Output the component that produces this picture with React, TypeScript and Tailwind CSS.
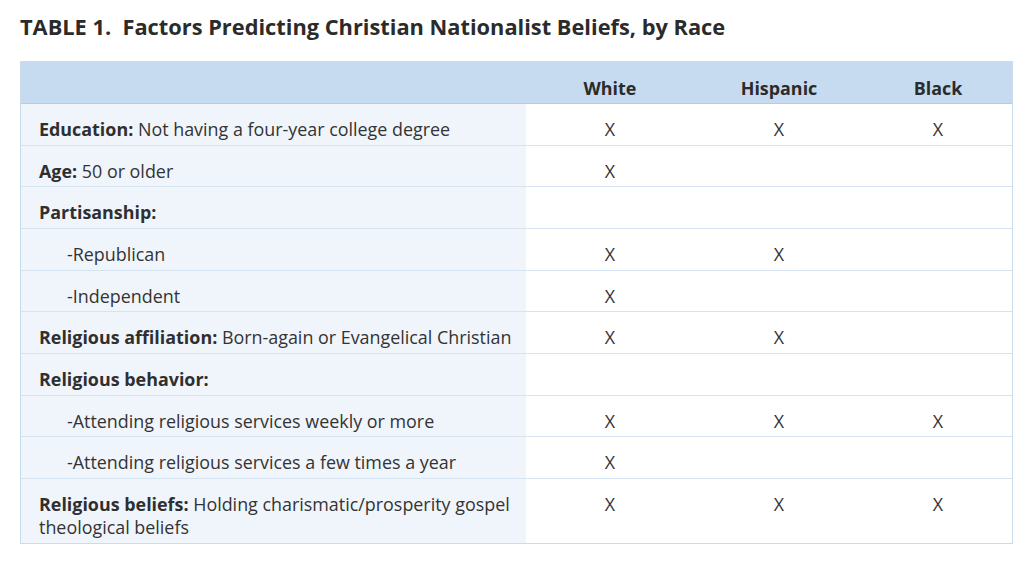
import React from 'react';

type Row = {
  label?: string;
  text?: string;
  indent?: boolean;
  marks: [boolean, boolean, boolean];
};

const ROWS: Row[] = [
  { label: 'Education:', text: 'Not having a four-year college degree', marks: [true, true, true] },
  { label: 'Age:', text: '50 or older', marks: [true, false, false] },
  { label: 'Partisanship:', marks: [false, false, false] },
  { text: '-Republican', indent: true, marks: [true, true, false] },
  { text: '-Independent', indent: true, marks: [true, false, false] },
  { label: 'Religious affiliation:', text: 'Born-again or Evangelical Christian', marks: [true, true, false] },
  { label: 'Religious behavior:', marks: [false, false, false] },
  { text: '-Attending religious services weekly or more', indent: true, marks: [true, true, true] },
  { text: '-Attending religious services a few times a year', indent: true, marks: [true, false, false] },
  {
    label: 'Religious beliefs:',
    text: 'Holding charismatic/prosperity gospel theological beliefs',
    marks: [true, true, true],
  },
];

const COLS = ['White', 'Hispanic', 'Black'];

const App: React.FC = () => {
  return (
    <div
      className="min-h-[563px] w-[1033px] bg-white px-[20px] pt-[13px] text-[#333333]"
      style={{ fontFamily: '"Open Sans", "Liberation Sans", sans-serif' }}
    >
      <h1 className="mb-[20px] whitespace-pre text-[21.8px] font-bold leading-[28px] text-[#2b2b2b]">
        {'TABLE 1.  Factors Predicting Christian Nationalist Beliefs, by Race'}
      </h1>

      <div className="w-[993px] border border-[#cadcec] text-[17.9px] leading-[23px]">
        {/* header */}
        <div className="grid grid-cols-[505px_168px_170px_148px] border-b border-[#b9cbe0] bg-[#c6dbf0] font-bold text-[#2b2b2b]">
          <div className="h-[41px]" />
          {COLS.map((c) => (
            <div key={c} className="pt-[15px] text-center">
              {c}
            </div>
          ))}
        </div>

        {ROWS.map((row, i) => (
          <div
            key={i}
            className={`grid grid-cols-[505px_168px_170px_148px] ${
              i < ROWS.length - 1 ? 'border-b border-[#d5e4f0]' : ''
            }`}
          >
            <div className={`bg-[#f0f5fc] pt-[14px] pb-[3.67px] pr-[2px] ${row.indent ? 'pl-[46px]' : 'pl-[18px]'}`}>
              {row.label && <span className="font-bold text-[#2f2f2f]">{row.label}</span>}
              {row.label && row.text ? ' ' : ''}
              {row.text}
            </div>
            {row.marks.map((m, j) => (
              <div key={j} className="pt-[14px] text-center">
                {m ? 'X' : ''}
              </div>
            ))}
          </div>
        ))}
      </div>
    </div>
  );
};

export default App;
